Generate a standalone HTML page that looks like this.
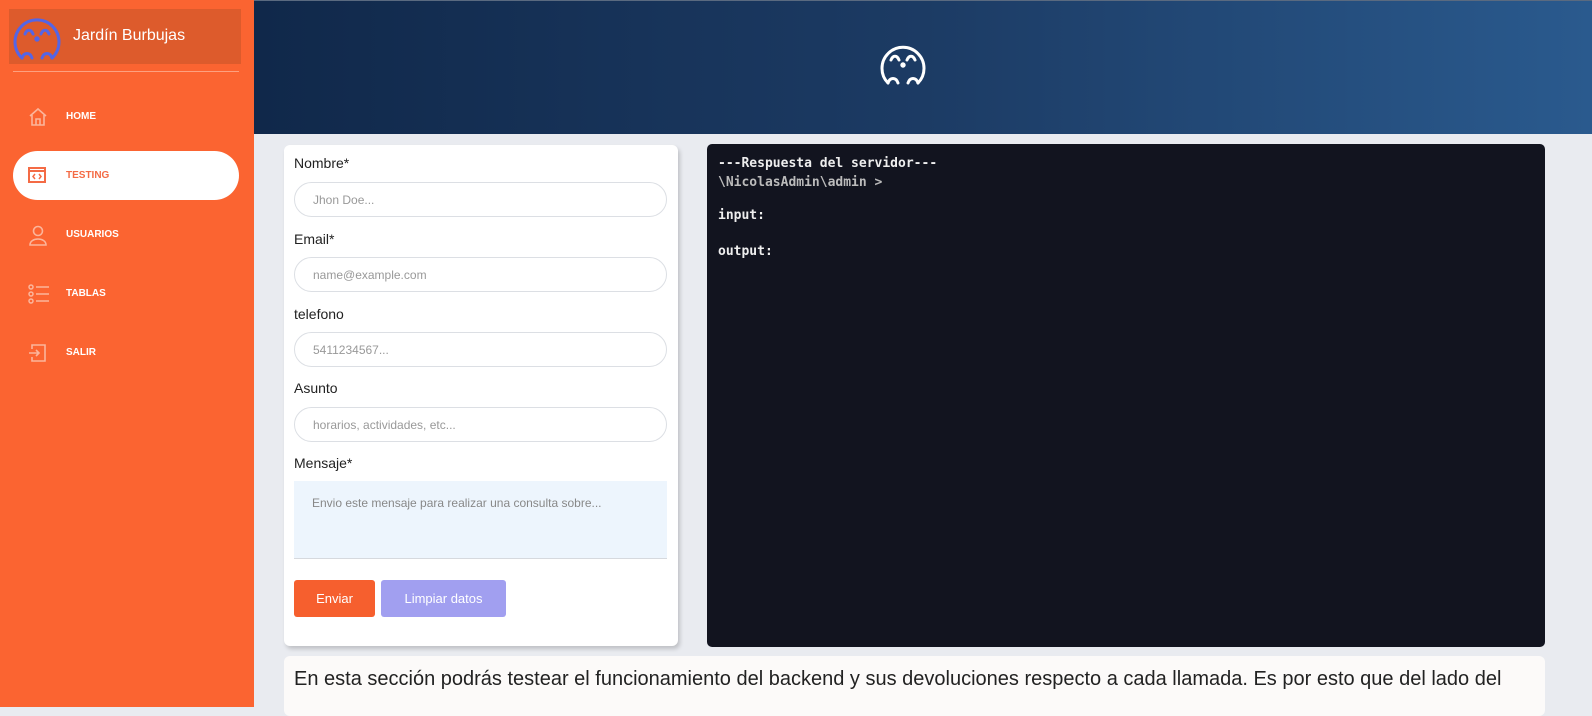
<!DOCTYPE html>
<html><head><meta charset="utf-8"><style>
*{box-sizing:border-box;margin:0;padding:0}
body{width:1592px;height:707px;overflow:hidden;background:#e9ebf0;font-family:"Liberation Sans",sans-serif;position:relative}
.side{position:absolute;left:0;top:0;width:254px;height:707px;background:#fb6431}
.logo{position:absolute;left:9px;top:9px;width:232px;height:55px;background:#dd5b2c;color:#fff;font-size:16px}
.logo span{position:absolute;left:64px;top:18px}
.hr{position:absolute;left:13px;top:71px;width:226px;height:1px;background:#fda07f}
.nav{position:absolute;left:13px;width:226px;height:49px;color:#fff;font-size:10px;font-weight:bold}
.nav span{position:absolute;left:53px;top:19px}
.nav svg{position:absolute;left:15px;top:15px}
.nav.act{background:#fff;border-radius:25px;color:#f46b45}
.head{position:absolute;left:254px;top:0;width:1338px;height:134px;background:linear-gradient(90deg,#10284a 0%,#1c3b64 50%,#2a5a8e 100%);border-top:1px solid #5a6a80}
.card{position:absolute;left:284px;top:145px;width:394px;height:501px;background:#fff;border-radius:6px;box-shadow:2px 3px 4px rgba(0,0,0,.18)}
.lbl{position:absolute;left:10px;font-size:14px;color:#222}
.in{position:absolute;left:10px;width:373px;height:35px;border:1px solid #dcdfe4;border-radius:18px;font-size:12px;color:#999;padding:10px 18px}
.ta{position:absolute;left:10px;top:336px;width:373px;height:78px;background:#edf5fd;border-bottom:1px solid #d6d9de;font-size:12px;color:#888;padding:15px 18px}
.btn{position:absolute;top:435px;height:37px;border-radius:3px;color:#fff;font-size:13px;text-align:center;line-height:37px}
.term{position:absolute;left:707px;top:144px;width:838px;height:503px;background:#12141f;border-radius:5px;font-family:"DejaVu Sans Mono","Liberation Mono",monospace;font-size:13px;font-weight:bold;color:#eee;padding:12px 11px}
.bot{position:absolute;left:284px;top:656px;width:1261px;height:60px;background:#fcfaf9;border-radius:6px;font-size:20px;color:#222;padding:12px 10px}
</style></head><body>
<div class="side">
<div class="logo"><svg style="position:absolute;left:3px;top:3px" width="50" height="52" viewBox="0 0 50 52" fill="none" stroke="#5465e6" stroke-width="3" stroke-linecap="round"><path d="M10 46 A22 22 0 1 1 40 46"/><path d="M10 46 C12 40 18 40 20 46 M30 46 C32 40 38 40 40 46"/><path d="M13 22 C15 17 19 17 21 22 M29 22 C31 17 35 17 37 22"/><circle cx="25" cy="27" r="1.2" fill="#5465e6"/></svg><span>Jardín Burbujas</span></div>
<div class="hr"></div>
<div class="nav" style="top:92px"><svg width="20" height="20" viewBox="0 0 20 20" fill="none" stroke="#fbb59b" stroke-width="1.6"><path d="M2 9 L10 2 L18 9 M4 8 V18 H16 V8 M8 18 V12 H12 V18"/></svg><span>HOME</span></div>
<div class="nav act" style="top:151px"><svg width="18" height="18" viewBox="0 0 18 18" fill="none" stroke="#f46b45" stroke-width="2"><rect x="1" y="2" width="16" height="14"/><path d="M1 5 H17" /><path d="M7 8 L5 10.5 L7 13 M11 8 L13 10.5 L11 13" stroke-width="1.5"/></svg><span>TESTING</span></div>
<div class="nav" style="top:210px"><svg width="20" height="22" viewBox="0 0 20 22" fill="none" stroke="#fbb59b" stroke-width="1.6"><circle cx="10" cy="6" r="4.5"/><path d="M2 20 C2 12 18 12 18 20 Z"/></svg><span>USUARIOS</span></div>
<div class="nav" style="top:269px"><svg width="22" height="20" viewBox="0 0 22 20" fill="none" stroke="#fbb59b" stroke-width="1.5"><circle cx="3" cy="3" r="2"/><circle cx="3" cy="10" r="2"/><circle cx="3" cy="17" r="2"/><path d="M8 3H21M8 10H21M8 17H21"/></svg><span>TABLAS</span></div>
<div class="nav" style="top:328px"><svg width="20" height="20" viewBox="0 0 20 20" fill="none" stroke="#fbb59b" stroke-width="1.6"><path d="M4 6 V2 H17 V18 H4 V14 M1 10 H11 M8 7 L11 10 L8 13"/></svg><span>SALIR</span></div>
</div>
<div class="head"><svg style="position:absolute;left:624px;top:38px" width="50" height="50" viewBox="0 0 50 50" fill="none" stroke="#fff" stroke-width="3" stroke-linecap="round"><path d="M10 44 A21 21 0 1 1 40 44"/><path d="M10 44 C12 38 18 38 20 44 M30 44 C32 38 38 38 40 44"/><path d="M13 21 C15 16 19 16 21 21 M29 21 C31 16 35 16 37 21"/><circle cx="25" cy="26" r="1.2" fill="#fff"/></svg></div>
<div class="card">
<div class="lbl" style="top:10px">Nombre*</div>
<div class="in" style="top:37px">Jhon Doe...</div>
<div class="lbl" style="top:86px">Email*</div>
<div class="in" style="top:112px">name@example.com</div>
<div class="lbl" style="top:161px">telefono</div>
<div class="in" style="top:187px">5411234567...</div>
<div class="lbl" style="top:235px">Asunto</div>
<div class="in" style="top:262px">horarios, actividades, etc...</div>
<div class="lbl" style="top:310px">Mensaje*</div>
<div class="ta">Envio este mensaje para realizar una consulta sobre...</div>
<div class="btn" style="left:10px;width:81px;background:#f65f2e">Enviar</div>
<div class="btn" style="left:97px;width:125px;background:#a19ff0">Limpiar datos</div>
</div>
<div class="term"><div>---Respuesta del servidor---</div><div style="color:#bbb;margin-top:4px">\NicolasAdmin\admin &gt;</div><div style="margin-top:18px">input:</div><div style="margin-top:21px">output:</div></div>
<div class="bot">En esta sección podrás testear el funcionamiento del backend y sus devoluciones respecto a cada llamada. Es por esto que del lado del</div>
</body></html>
